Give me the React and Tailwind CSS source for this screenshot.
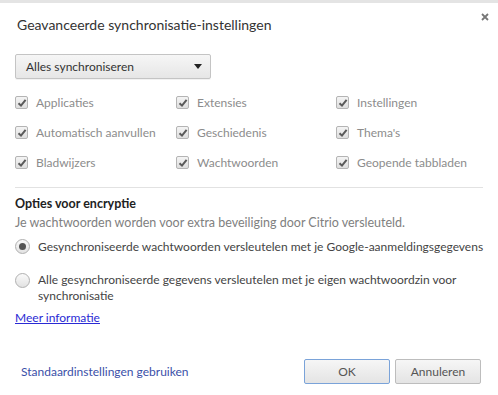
import React, { useState } from 'react';

const syncItems = [
  ['Applicaties', 'Extensies', 'Instellingen'],
  ['Automatisch aanvullen', 'Geschiedenis', "Thema's"],
  ['Bladwijzers', 'Wachtwoorden', 'Geopende tabbladen'],
];

function CheckBox() {
  return (
    <span className="flex h-[13px] w-[13px] shrink-0 items-center justify-center rounded-[2px] border border-[#b4b4b4] bg-gradient-to-b from-[#f4f4f4] to-[#dedede]">
      <svg width="10" height="10" viewBox="0 0 10 10">
        <path d="M1.5 5.2 L4 7.6 L8.6 1.8" fill="none" stroke="#5a5a5a" strokeWidth="2" />
      </svg>
    </span>
  );
}

function Radio({ checked }) {
  return (
    <span className="flex h-[15px] w-[15px] shrink-0 items-center justify-center rounded-full border border-[#b0b0b0] bg-gradient-to-b from-[#fafafa] to-[#e2e2e2]">
      {checked && <span className="h-[7px] w-[7px] rounded-full bg-[#555]" />}
    </span>
  );
}

export default function App() {
  const [mode, setMode] = useState('google');

  return (
    <div className="flex h-[395px] w-[498px] flex-col overflow-hidden bg-white text-[12px] text-[#333] font-['Segoe_UI','Lato',sans-serif]">
      <div className="h-[3px] bg-[#e4e4e4]" />

      {/* header */}
      <div className="flex items-start justify-between pl-[17px] pr-[9px] pt-[12px]">
        <h1 className="text-[14px] leading-[20px] text-[#333]">Geavanceerde synchronisatie-instellingen</h1>
        <svg className="mt-[-2px]" width="8" height="8" viewBox="0 0 8 8">
          <path d="M1 1 L7 7 M7 1 L1 7" stroke="#777" strokeWidth="1.8" />
        </svg>
      </div>

      <div className="pl-[15px] pr-[10px]">
        {/* dropdown */}
        <div className="mt-[19px] flex h-[25px] w-[196px] items-center justify-between rounded-[2px] border border-[#c4c4c4] bg-gradient-to-b from-[#f6f6f6] to-[#e6e6e6] pl-[10px] pr-[8px] shadow-[0_1px_0_rgba(0,0,0,0.05)]">
          <span className="text-[12px] text-[#333]">Alles synchroniseren</span>
          <svg width="8" height="5" viewBox="0 0 8 5">
            <path d="M0 0 H8 L4 5 Z" fill="#222" />
          </svg>
        </div>

        {/* sync items */}
        <div className="mt-[14px] flex flex-col gap-[11px]">
          {syncItems.map((row, i) => (
            <div key={i} className="grid grid-cols-[161px_160px_1fr]">
              {row.map((label) => (
                <div key={label} className="flex h-[19px] items-center gap-[8px] whitespace-nowrap">
                  <CheckBox />
                  <span className="text-[12px] text-[#8c8c8c]">{label}</span>
                </div>
              ))}
            </div>
          ))}
        </div>

        <div className="mt-[15px] h-px w-[468px] bg-[#e2e2e2]" />

        {/* encryption */}
        <h2 className="mt-[7px] text-[12.5px] font-bold leading-[18px] text-[#222]">Opties voor encryptie</h2>
        <p className="mt-[1px] text-[12.5px] leading-[17px] text-[#808080]">
          Je wachtwoorden worden voor extra beveiliging door Citrio versleuteld.
        </p>

        <div className="mt-[7px] flex flex-col gap-[17px]">
          <label className="flex cursor-pointer items-start gap-[8px]" onClick={() => setMode('google')}>
            <span className="pt-[1px]"><Radio checked={mode === 'google'} /></span>
            <span className="whitespace-nowrap text-[12px] leading-[17px] text-[#444]">
              Gesynchroniseerde wachtwoorden versleutelen met je Google-aanmeldingsgegevens
            </span>
          </label>
          <label className="flex cursor-pointer items-start gap-[8px]" onClick={() => setMode('own')}>
            <span className="pt-[1px]"><Radio checked={mode === 'own'} /></span>
            <span className="text-[12px] leading-[16px] text-[#444]">
              Alle gesynchroniseerde gegevens versleutelen met je eigen wachtwoordzin voor synchronisatie
            </span>
          </label>
        </div>

        <a href="#" className="mt-[5px] inline-block text-[12px] leading-[17px] text-[#2a2ad4] underline">
          Meer informatie
        </a>
      </div>

      {/* footer */}
      <div className="mt-auto flex items-center justify-between pb-[11px] pl-[21px] pr-[17px]">
        <a href="#" className="text-[12px] text-[#3b4fa8]">Standaardinstellingen gebruiken</a>
        <div className="flex gap-[5px]">
          <button className="h-[25px] w-[86px] rounded-[2px] border border-[#7aa3d9] bg-gradient-to-b from-[#f6f6f6] to-[#e4e4e4] text-[12px] text-[#555]">
            OK
          </button>
          <button className="h-[25px] w-[86px] rounded-[2px] border border-[#bdbdbd] bg-gradient-to-b from-[#f6f6f6] to-[#e4e4e4] text-[12px] text-[#555]">
            Annuleren
          </button>
        </div>
      </div>
    </div>
  );
}
